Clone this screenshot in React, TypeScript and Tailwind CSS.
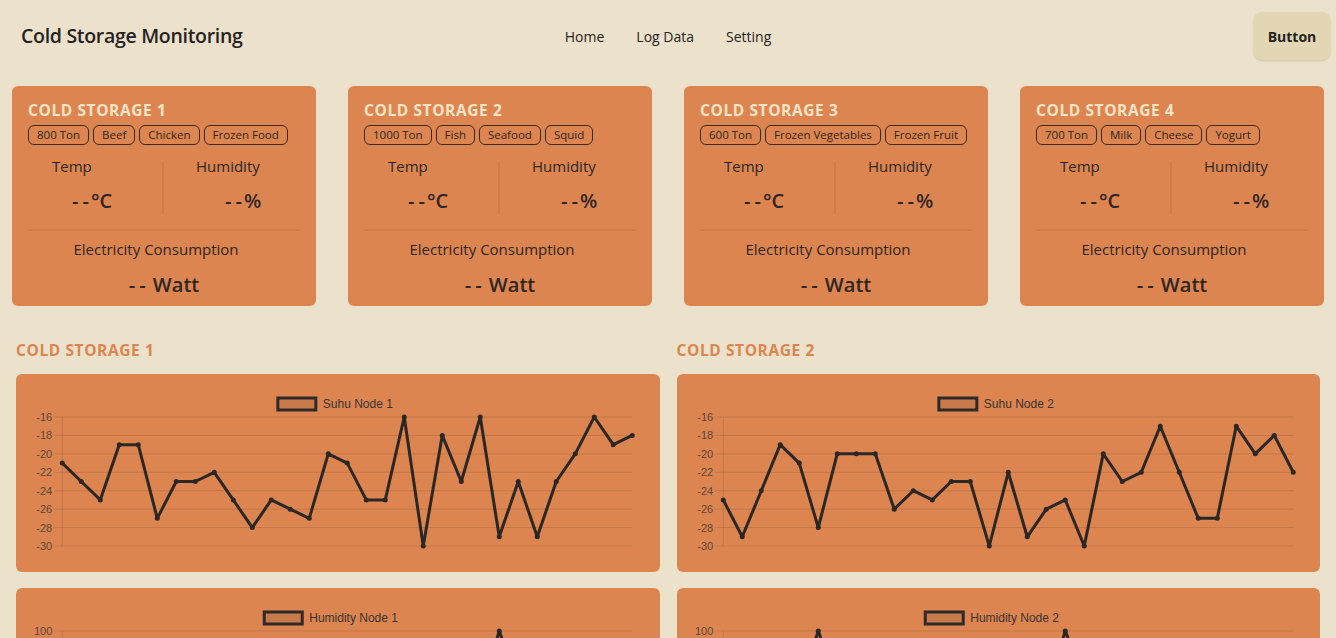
import React from 'react';

type Storage = { name: string; tags: string[] };

const storages: Storage[] = [
    { name: 'Cold Storage 1', tags: ['800 Ton', 'Beef', 'Chicken', 'Frozen Food'] },
    { name: 'Cold Storage 2', tags: ['1000 Ton', 'Fish', 'Seafood', 'Squid'] },
    { name: 'Cold Storage 3', tags: ['600 Ton', 'Frozen Vegetables', 'Frozen Fruit'] },
    { name: 'Cold Storage 4', tags: ['700 Ton', 'Milk', 'Cheese', 'Yogurt'] },
];

const suhu1 = [-21, -23, -25, -19, -19, -27, -23, -23, -22, -25, -28, -25, -26, -27, -20, -21, -25, -25, -16, -30, -18, -23, -16, -29, -23, -29, -23, -20, -16, -19, -18];
const suhu2 = [-25, -29, -24, -19, -21, -28, -20, -20, -20, -26, -24, -25, -23, -23, -30, -22, -29, -26, -25, -30, -20, -23, -22, -17, -22, -27, -27, -17, -20, -18, -22];
const hum1 = [72, 60, 65, 54, 70, 56, 68, 62, 54, 61, 69, 57, 65, 66, 53, 59, 68, 63, 51, 64, 56, 55, 50, 100, 58, 67, 52, 54, 69, 60, 56];
const hum2 = [58, 66, 52, 61, 55, 100, 59, 64, 53, 62, 60, 57, 68, 56, 54, 65, 59, 50, 100, 63, 52, 67, 61, 56, 64, 58, 51, 68, 59, 55, 63];

const font = "font-['Open_Sans',sans-serif]";

// "--" placeholder, the two dashes spaced apart like the reference
const Dash: React.FC = () => (
    <>
        <span className="tracking-[4px]">-</span>
        <span className="tracking-[2px]">-</span>
    </>
);

const StatCard: React.FC<{ s: Storage }> = ({ s }) => (
    <div className="bg-[#dc8550] rounded-md px-4 pt-[14px] h-[220px] text-[#2d2622]">
        <h2 className="uppercase text-[#f6e4c6] font-bold text-[15.5px] tracking-[0.6px] leading-5">{s.name}</h2>
        <div className="flex gap-1 mt-[5px] whitespace-nowrap">
            {s.tags.map((t) => (
                <span key={t} className="border border-[#3a2a22] rounded-md px-[8px] h-[20px] leading-[18px] text-[11.5px]">
                    {t}
                </span>
            ))}
        </div>
        <div className="flex mt-[17px] h-[52px]">
            <div className="w-1/2 border-r-2 border-[#cf7a47]">
                <p className="pl-6 text-[15px] leading-5 -mt-[6px]">Temp</p>
                <p className="pl-[44px] text-[20px] font-semibold leading-6 mt-[13px]">
                    <Dash />°C
                </p>
            </div>
            <div className="w-1/2">
                <p className="pl-8 text-[15px] leading-5 -mt-[6px]">Humidity</p>
                <p className="pl-[61px] text-[20px] font-semibold leading-6 mt-[13px]">
                    <Dash />%
                </p>
            </div>
        </div>
        <div className="border-t-2 border-[#cf7a47] mt-[15px]"></div>
        <p className="text-center text-[15px] leading-5 mt-[8px] pr-4">Electricity Consumption</p>
        <p className="text-center text-[20px] font-semibold leading-6 mt-[14px]">
            <Dash /> Watt
        </p>
    </div>
);

const LineChart: React.FC<{ label: string; data: number[]; min: number; max: number; step: number }> = ({ label, data, min, max, step }) => {
    const left = 46, right = 616, top = 43, bottom = 172;
    const x = (i: number) => left + (i * (right - left)) / (data.length - 1);
    const y = (v: number) => top + ((max - v) / (max - min)) * (bottom - top);
    const ticks: number[] = [];
    for (let v = max; v >= min; v -= step) ticks.push(v);
    const pts = data.map((v, i) => `${x(i)},${y(v)}`).join(' ');
    const legendW = 38 + 7 + label.length * 6.8;
    const lx = 321.5 - legendW / 2;
    return (
        <div className="bg-[#dc8550] rounded-md h-[198px]">
            <svg viewBox="0 0 643 198" className="block w-full h-full">
                <rect x={lx} y={24} width={38} height={12} fill="#c97a4b" stroke="#2e2a28" strokeWidth={3} />
                <text x={lx + 45} y={34} fontSize={12} fill="#3a3330" fontFamily="'Liberation Sans', Arial, sans-serif">{label}</text>
                {ticks.map((t) => (
                    <g key={t}>
                        <line x1={38} x2={right} y1={y(t)} y2={y(t)} stroke="rgba(0,0,0,0.1)" strokeWidth={1} />
                        <text x={36} y={y(t) + 4} fontSize={11} textAnchor="end" fill="#5e4537" fontFamily="'Liberation Sans', Arial, sans-serif">{t}</text>
                    </g>
                ))}
                <line x1={left} x2={left} y1={top} y2={bottom} stroke="rgba(0,0,0,0.1)" strokeWidth={1} />
                <polyline points={pts} fill="none" stroke="#2b2724" strokeWidth={3} strokeLinejoin="round" />
                {data.map((v, i) => (
                    <circle key={i} cx={x(i)} cy={y(v)} r={2.5} fill="#2b2724" />
                ))}
            </svg>
        </div>
    );
};

const App: React.FC = () => {
    return (
        <div className={`min-h-screen bg-[#ece1ca] text-[#26221f] ${font}`}>
            <nav className="h-[72px] flex items-center justify-between pl-[21px] pr-[6px] relative">
                <h1 className="text-[19.5px] font-semibold tracking-[-0.3px]">Cold Storage Monitoring</h1>
                <ul className="absolute left-1/2 -translate-x-1/2 flex gap-8 text-[14px] top-[26px]">
                    <li>Home</li>
                    <li>Log Data</li>
                    <li>Setting</li>
                </ul>
                <button className="w-[76px] h-[48px] rounded-lg bg-[#e2d6b4] text-[14px] font-bold shadow-sm">Button</button>
            </nav>

            <section className="grid grid-cols-4 gap-8 px-3 mt-[14px]">
                {storages.map((s) => (
                    <StatCard key={s.name} s={s} />
                ))}
            </section>

            <section className="grid grid-cols-2 gap-[17px] px-4 mt-[34px] pb-6">
                {[
                    { title: 'Cold Storage 1', suhu: suhu1, hum: hum1, n: 1 },
                    { title: 'Cold Storage 2', suhu: suhu2, hum: hum2, n: 2 },
                ].map((c) => (
                    <div key={c.title} className="flex flex-col gap-4">
                        <h3 className="uppercase text-[#dc8550] font-bold text-[15.5px] tracking-[0.6px] leading-5 h-[18px]">{c.title}</h3>
                        <LineChart label={`Suhu Node ${c.n}`} data={c.suhu} min={-30} max={-16} step={2} />
                        <LineChart label={`Humidity Node ${c.n}`} data={c.hum} min={0} max={100} step={10} />
                    </div>
                ))}
            </section>
        </div>
    );
};

export default App;
